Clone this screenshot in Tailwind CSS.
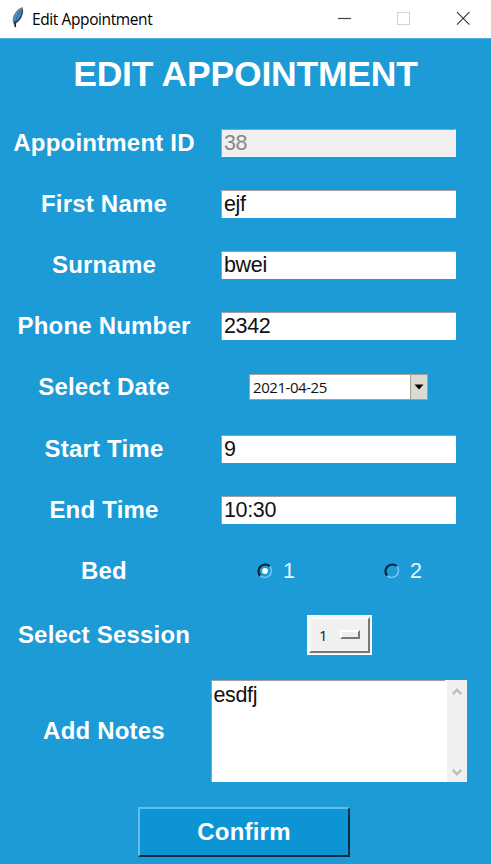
<!DOCTYPE html>
<html lang="en">
<head>
<meta charset="utf-8">
<title>Edit Appointment</title>
<script src="https://cdn.jsdelivr.net/npm/@tailwindcss/browser@4"></script>
</head>
<body class="w-[491px] h-[864px] overflow-hidden bg-[#1c9bd7] font-['Liberation_Sans',Arial,sans-serif] flex flex-col">
<header class="h-[38px] shrink-0 bg-white flex items-center pl-2.5">
  <svg class="w-4 h-6 shrink-0 -mt-1" viewBox="0 0 16 24">
    <path d="M12.3 3C8 4 3.4 9.5 3.1 15.5L4.4 19l2.4-1.8C10.6 14.5 13.6 9 12.3 3Z" fill="#4f8bd0" stroke="#777c84" stroke-width="1.3"/>
    <path d="M12.4 4.5C12.4 9.5 10 14 6.4 17.2" fill="none" stroke="#2e3742" stroke-width="1.2"/>
    <path d="M10.6 6C7.5 10 6 14 5.4 18" fill="none" stroke="#2a5a92" stroke-width=".9"/>
    <path d="M4.8 16.5l.6 5.7" stroke="#222" stroke-width="1.6"/>
  </svg>
  <span class="ml-[6px] text-[15.5px] leading-5 text-black font-['Open_Sans','Noto_Sans',sans-serif] tracking-[-0.4px] whitespace-nowrap">Edit Appointment</span>
  <svg class="ml-auto w-[155px] h-[38px] shrink-0" viewBox="0 0 155 38" fill="none">
    <path d="M2 18.5h13" stroke="#444" stroke-width="1.2"/>
    <rect x="61.5" y="12.5" width="12" height="12" stroke="#d4d4d4"/>
    <path d="M121 12.2l12.4 12.4M133.4 12.2L121 24.6" stroke="#333" stroke-width="1.1"/>
  </svg>
</header>
<main class="flex flex-col border-t border-[#48b0e2]">
  <h1 class="h-[73px] pb-[2px] flex items-center justify-center text-[35.5px] font-bold text-white tracking-[-0.2px] whitespace-nowrap">EDIT APPOINTMENT</h1>
  <div class="grid grid-cols-[208px_261px] grid-rows-[repeat(8,61.2px)_66px_127px] items-center justify-items-center text-[21.5px] leading-[25px] tracking-[-0.35px] text-[#111]">
    <label class="text-2xl font-bold text-white tracking-[0.2px]">Appointment ID</label>
    <div class="w-[235px] h-7 border-t border-l border-t-[#a0a0a0] border-l-[#a0a0a0] border-r border-b border-r-[#e8f4fb] border-b-[#e8f4fb] bg-[#f0f0f0] pl-0.5 pt-px text-[#888]">38</div>
    <label class="text-2xl font-bold text-white tracking-[0.2px]">First Name</label>
    <div class="w-[235px] h-7 border-t border-l border-t-[#a0a0a0] border-l-[#a0a0a0] bg-white pl-0.5 pt-px">ejf</div>
    <label class="text-2xl font-bold text-white tracking-[0.2px]">Surname</label>
    <div class="w-[235px] h-7 border-t border-l border-t-[#a0a0a0] border-l-[#a0a0a0] bg-white pl-0.5 pt-px">bwei</div>
    <label class="text-2xl font-bold text-white tracking-[0.2px]">Phone Number</label>
    <div class="w-[235px] h-7 border-t border-l border-t-[#a0a0a0] border-l-[#a0a0a0] bg-white pl-0.5 pt-px">2342</div>
    <label class="text-2xl font-bold text-white tracking-[0.2px]">Select Date</label>
    <div class="w-[179px] h-[26px] border border-[#a89f96] bg-white flex items-center">
      <span class="pl-[3px] flex-1 text-[15px] leading-5 tracking-[-0.45px] font-['Open_Sans','Noto_Sans',sans-serif]">2021-04-25</span>
      <div class="w-[17px] h-full border-l border-[#a89f96] bg-[#dcdad5] flex items-center justify-center">
        <svg class="w-[10px] h-[6px]" viewBox="0 0 10 6"><path d="M.5 .5h9L5 5.5Z" fill="#000"/></svg>
      </div>
    </div>
    <label class="text-2xl font-bold text-white tracking-[0.2px]">Start Time</label>
    <div class="w-[235px] h-7 border-t border-l border-t-[#a0a0a0] border-l-[#a0a0a0] bg-white pl-0.5 pt-px">9</div>
    <label class="text-2xl font-bold text-white tracking-[0.2px]">End Time</label>
    <div class="w-[235px] h-7 border-t border-l border-t-[#a0a0a0] border-l-[#a0a0a0] bg-white pl-0.5 pt-px">10:30</div>
    <label class="text-2xl font-bold text-white tracking-[0.2px]">Bed</label>
    <div class="w-full flex items-center text-[#e8f6fd] pl-[49px]">
      <div class="w-[127px] flex items-center">
        <svg class="w-4 h-4" viewBox="0 0 16 16" fill="none"><path d="M3.2 12.8A6.8 6.8 0 0 1 12.8 3.2" stroke="#0b2230" stroke-width="2.2"/><path d="M12.8 3.2A6.8 6.8 0 0 1 3.2 12.8" stroke="#7cc9f0" stroke-width="1.4"/><circle cx="8" cy="8" r="2.9" fill="#fff"/></svg>
        <span class="ml-2.5 pt-[2px]">1</span>
      </div>
      <svg class="w-4 h-4" viewBox="0 0 16 16" fill="none"><path d="M3.2 12.8A6.8 6.8 0 0 1 12.8 3.2" stroke="#0b2230" stroke-width="2.2"/><path d="M12.8 3.2A6.8 6.8 0 0 1 3.2 12.8" stroke="#7cc9f0" stroke-width="1.4"/></svg>
      <span class="ml-2.5 pt-[2px]">2</span>
    </div>
    <label class="text-2xl font-bold text-white tracking-[0.2px]">Select Session</label>
    <div class="w-[65px] h-10 ml-[2px] bg-[#f4f4f4] border border-[#fafafa] p-px">
      <div class="w-full h-full border-2 border-t-[#fafafa] border-l-[#fafafa] border-r-[#777] border-b-[#777] bg-[#f0f0f0] flex items-center pl-2">
        <span class="text-[15px] leading-5 font-['Open_Sans','Noto_Sans',sans-serif] text-[#221528]">1</span>
        <div class="ml-[13px] mb-px w-[20px] h-[9px] border-2 border-t-[#fff] border-l-[#fff] border-r-[#777] border-b-[#777] bg-[#eee]"></div>
      </div>
    </div>
    <label class="text-2xl font-bold text-white tracking-[0.2px]">Add Notes</label>
    <div class="w-[256px] h-[102px] bg-white flex">
      <div class="flex-1 border-t border-l border-[#a0a0a0] pl-0.5 pt-[2px]">esdfj</div>
      <div class="w-[22px] h-full flex">
        <div class="w-[2px]"></div>
        <div class="flex-1 bg-[#f0f0f0] flex flex-col justify-between items-center pt-2 pb-1.5">
          <svg class="w-[10px] h-[8px]" viewBox="0 0 10 8" fill="none"><path d="M.7 6.2L5 1.9l4.3 4.3" stroke="#bbb" stroke-width="2.2"/></svg>
          <svg class="w-[10px] h-[8px]" viewBox="0 0 10 8" fill="none"><path d="M.7 1.8L5 6.1l4.3-4.3" stroke="#bbb" stroke-width="2.2"/></svg>
        </div>
      </div>
    </div>
  </div>
  <button class="mt-[12px] ml-[138px] w-[212px] h-[50px] border-2 border-t-[#62bdec] border-l-[#62bdec] border-r-[#082b3d] border-b-[#082b3d] bg-[#0c94d5] text-2xl font-bold text-white tracking-[0.2px]">Confirm</button>
</main>
</body>
</html>
